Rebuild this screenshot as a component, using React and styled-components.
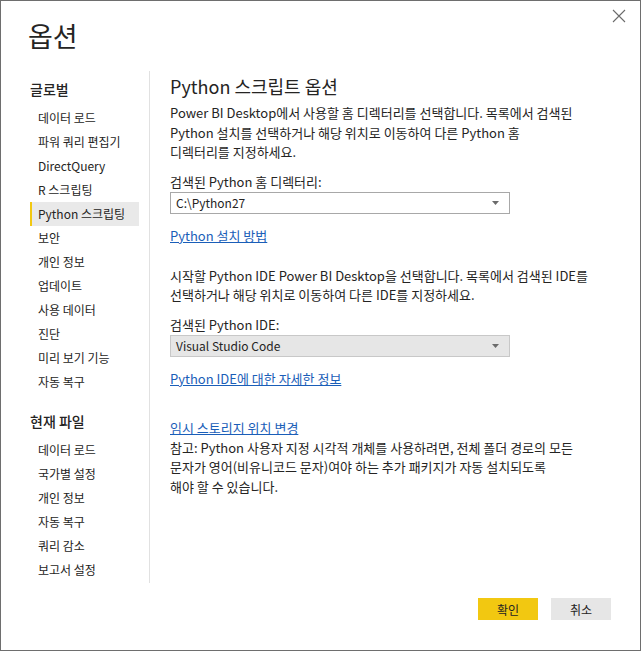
import React from "react";
import styled, { createGlobalStyle } from "styled-components";

const GlobalStyle = createGlobalStyle`
	html, body {
		margin: 0;
		padding: 0;
		background: #ffffff;
	}
	body {
		font-family: "Noto Sans CJK KR", "Noto Sans", sans-serif;
		color: #252423;
	}
`;

const globalItems = [
	"데이터 로드",
	"파워 쿼리 편집기",
	"DirectQuery",
	"R 스크립팅",
	"Python 스크립팅",
	"보안",
	"개인 정보",
	"업데이트",
	"사용 데이터",
	"진단",
	"미리 보기 기능",
	"자동 복구",
];

const fileItems = ["데이터 로드", "국가별 설정", "개인 정보", "자동 복구", "쿼리 감소", "보고서 설정"];

const CloseIcon = () => (
	<svg width="14" height="14" viewBox="0 0 14 14">
		<path d="M1 1 L13 13 M13 1 L1 13" stroke="#6b6b6b" strokeWidth="1.1" fill="none" />
	</svg>
);

const Caret = () => (
	<svg width="7" height="4" viewBox="0 0 7 4">
		<path d="M0 0 H7 L3.5 4 Z" fill="#6b6b6b" />
	</svg>
);

const App = () => {
	return (
		<>
			<GlobalStyle />
			<Window>
				<Header>
					<Title>옵션</Title>
					<CloseButton aria-label="닫기">
						<CloseIcon />
					</CloseButton>
				</Header>
				<Body>
					<Sidebar>
						<GroupTitle>글로벌</GroupTitle>
						<NavList>
							{globalItems.map((item) => (
								<NavItem key={item} $active={item === "Python 스크립팅"}>
									{item}
								</NavItem>
							))}
						</NavList>
						<GroupTitle $spaced>현재 파일</GroupTitle>
						<NavList>
							{fileItems.map((item) => (
								<NavItem key={item}>{item}</NavItem>
							))}
						</NavList>
					</Sidebar>
					<Content>
						<Heading>Python 스크립트 옵션</Heading>
						<Paragraph>
							Power BI Desktop에서 사용할 홈 디렉터리를 선택합니다. 목록에서 검색된
							<br />
							Python 설치를 선택하거나 해당 위치로 이동하여 다른 Python 홈
							<br />
							디렉터리를 지정하세요.
						</Paragraph>
						<Label>검색된 Python 홈 디렉터리:</Label>
						<Select>
							<span>C:\Python27</span>
							<Caret />
						</Select>
						<Link href="#">Python 설치 방법</Link>
						<Paragraph $top={20}>
							시작할 Python IDE Power BI Desktop을 선택합니다. 목록에서 검색된 IDE를
							<br />
							선택하거나 해당 위치로 이동하여 다른 IDE를 지정하세요.
						</Paragraph>
						<Label>검색된 Python IDE:</Label>
						<Select $filled>
							<span>Visual Studio Code</span>
							<Caret />
						</Select>
						<Link href="#">Python IDE에 대한 자세한 정보</Link>
						<Link href="#" $top={29}>
							임시 스토리지 위치 변경
						</Link>
						<Paragraph $top={0}>
							참고: Python 사용자 지정 시각적 개체를 사용하려면, 전체 폴더 경로의 모든
							<br />
							문자가 영어(비유니코드 문자)여야 하는 추가 패키지가 자동 설치되도록
							<br />
							해야 할 수 있습니다.
						</Paragraph>
					</Content>
				</Body>
				<Footer>
					<Button $primary>확인</Button>
					<Button>취소</Button>
				</Footer>
			</Window>
		</>
	);
};

export default App;

const Window = styled.div`
	width: 641px;
	height: 651px;
	box-sizing: border-box;
	border: 1px solid #6e6e6e;
	display: flex;
	flex-direction: column;
	background: #ffffff;
`;

const Header = styled.div`
	height: 70px;
	display: flex;
	justify-content: space-between;
	align-items: flex-start;
	padding: 0 12px 0 27px;
`;

const Title = styled.h1`
	margin: 15px 0 0;
	font-size: 27px;
	font-weight: 400;
	line-height: 40px;
	color: #252423;
`;

const CloseButton = styled.button`
	margin-top: 6px;
	padding: 0;
	border: none;
	background: none;
	width: 18px;
	height: 18px;
	display: flex;
	align-items: center;
	justify-content: center;
	cursor: pointer;
`;

const Body = styled.div`
	display: flex;
	height: 512px;
`;

const Sidebar = styled.nav`
	width: 149px;
	box-sizing: border-box;
	padding: 6px 10px 0 29px;
	border-right: 1px solid #e1e1e1;
`;

const GroupTitle = styled.div`
	font-size: 14px;
	font-weight: 500;
	line-height: 24px;
	margin-top: ${(p) => (p.$spaced ? "15px" : "0")};
	margin-bottom: 5px;
	color: #252423;
`;

const NavList = styled.div`
	display: flex;
	flex-direction: column;
`;

const NavItem = styled.div`
	height: 24px;
	line-height: 24px;
	font-size: 12px;
	box-sizing: border-box;
	padding-left: 6px;
	color: #252423;
	background: ${(p) => (p.$active ? "#e9e9e9" : "transparent")};
	border-left: 2px solid ${(p) => (p.$active ? "#f2c811" : "transparent")};
	white-space: nowrap;
`;

const Content = styled.div`
	flex: 1;
	padding: 3px 20px 0 20px;
	display: flex;
	flex-direction: column;
	align-items: flex-start;
`;

const Heading = styled.h2`
	margin: 0 0 5px;
	font-size: 18px;
	font-weight: 400;
	line-height: 24px;
	color: #252423;
`;

const Paragraph = styled.p`
	margin: ${(p) => (p.$top ?? 0) + "px"} 0 0;
	font-size: 13px;
	line-height: 19.5px;
	white-space: nowrap;
	color: #252423;
`;

const Label = styled.div`
	margin-top: 10px;
	font-size: 13px;
	line-height: 20px;
	color: #252423;
`;

const Select = styled.div`
	width: 340px;
	height: 22px;
	box-sizing: border-box;
	border: 1px solid ${(p) => (p.$filled ? "#c8c8c8" : "#a8a8a8")};
	background: ${(p) => (p.$filled ? "#e6e6e6" : "#ffffff")};
	display: flex;
	align-items: center;
	justify-content: space-between;
	padding: 0 10px 0 5px;
	font-size: 12px;
	color: #252423;
`;

const Link = styled.a`
	margin-top: ${(p) => (p.$top ?? 12) + "px"};
	font-size: 13px;
	line-height: 20px;
	color: #1a5eb8;
	text-decoration: underline;
`;

const Footer = styled.div`
	flex: 1;
	display: flex;
	justify-content: flex-end;
	align-items: flex-start;
	gap: 13px;
	padding: 15px 29px 0 0;
`;

const Button = styled.button`
	width: 60px;
	height: 22px;
	border: none;
	padding: 0;
	font-family: inherit;
	font-size: 12px;
	color: #252423;
	background: ${(p) => (p.$primary ? "#f2c811" : "#e6e6e6")};
	cursor: pointer;
`;
